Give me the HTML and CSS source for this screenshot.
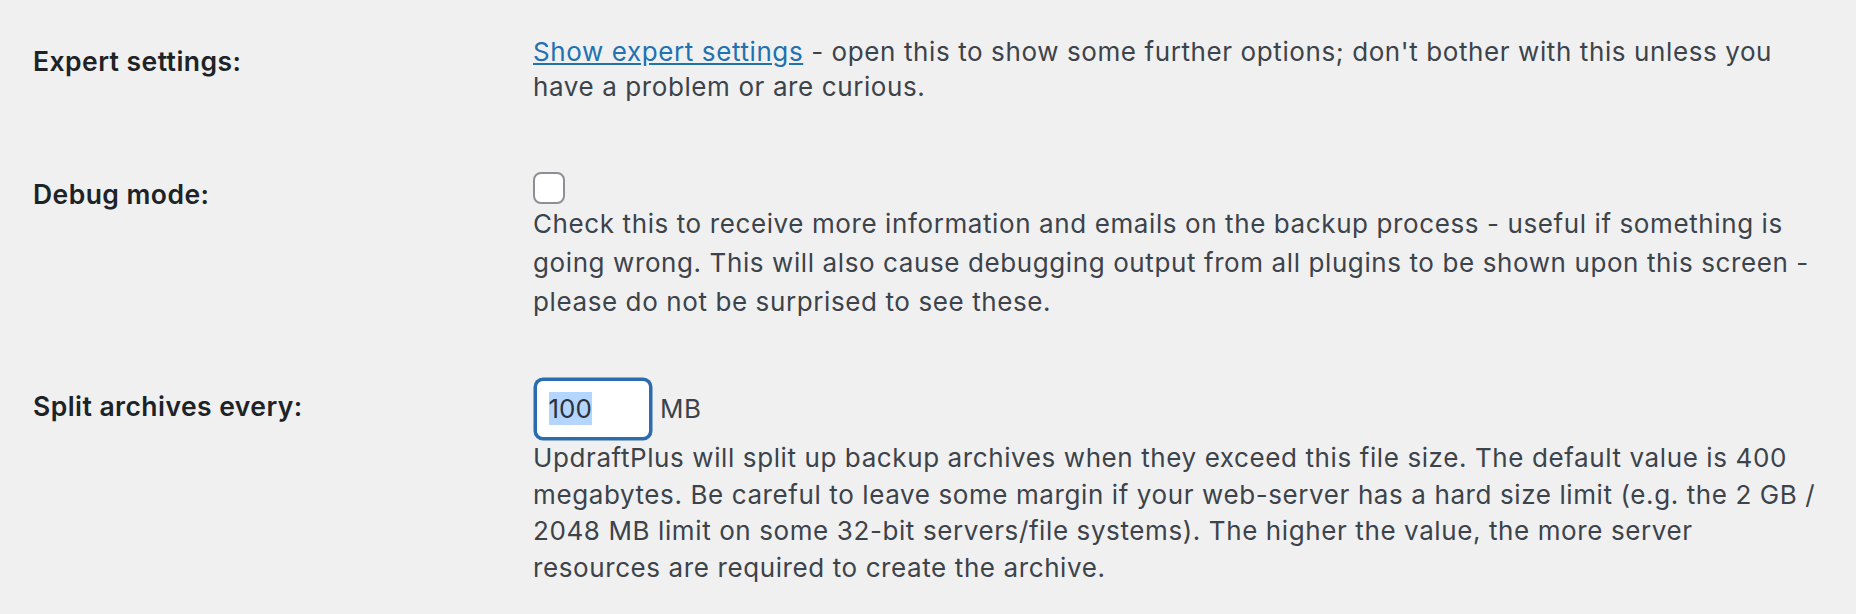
FILE: index.html
```html
<!DOCTYPE html>
<html lang="en">
<head>
    <meta charset="UTF-8">
    <meta name="viewport" content="width=device-width, initial-scale=1.0">
    <title>Advanced Settings</title>
    <link rel="stylesheet" href="styles.css">
</head>
<body>
    <div class="form-table">
        <div class="row">
            <div class="label">Expert settings:</div>
            <div class="value"><a href="#" class="expert-link">Show expert settings</a> - open this to show some further options; don't bother with this unless you have a problem or are curious.</div>
        </div>

        <div class="row">
            <div class="label">Debug mode:</div>
            <div class="value">
                <span class="checkbox"></span>
                <div class="desc desc-debug">Check this to receive more information and emails on the backup process - useful if something is going wrong. This will also cause debugging output from all plugins to be shown upon this screen - please do not be surprised to see these.</div>
            </div>
        </div>

        <div class="row">
            <div class="label">Split archives every:</div>
            <div class="value">
                <div class="field-row">
                    <div class="number-input"><span class="selected">100</span></div>
                    <span>MB</span>
                </div>
                <div class="desc desc-split">UpdraftPlus will split up backup archives when they exceed this file size. The default value is 400 megabytes. Be careful to leave some margin if your web-server has a hard size limit (e.g. the 2 GB / 2048 MB limit on some 32-bit servers/file systems). The higher the value, the more server resources are required to create the archive.</div>
            </div>
        </div>
    </div>
</body>
</html>
```

FILE: styles.css
```css
body {
    margin: 0;
    padding: 4px 0 0 33px;
    background-color: #f0f0f1;
    font-family: Inter, "Liberation Sans", sans-serif;
    font-size: 26px;
    letter-spacing: 0.6px;
    color: #3c434a;
}
.row {
    display: grid;
    grid-template-columns: 500px 1284px;
}
.label {
    padding-top: 40px;
    line-height: 35px;
    font-size: 26.5px;
    font-weight: 600;
    letter-spacing: 0.45px;
    color: #1d2327;
}
.value {
    padding: 30px 0 33px;
    line-height: 35px;
}
.expert-link {
    color: #2271b1;
    text-decoration: underline;
}
.checkbox {
    display: block;
    width: 32px;
    height: 32px;
    margin-top: 5px;
    box-sizing: border-box;
    border: 2px solid #8c8f94;
    border-radius: 8px;
    background-color: #fff;
}
.desc-debug {
    line-height: 39px;
    margin-bottom: -5px;
}
.field-row {
    display: flex;
    align-items: center;
    gap: 8px;
    margin-top: -2px;
}
.number-input {
    width: 116px;
    height: 60px;
    box-sizing: border-box;
    margin: 1.5px;
    padding-left: 12px;
    display: flex;
    align-items: center;
    border: 2px solid #2c6cae;
    box-shadow: 0 0 0 1.5px #2c6cae;
    border-radius: 8px;
    background-color: #fff;
    color: #2c3338;
    letter-spacing: 0;
}
.selected {
    background-color: #b4d5fe;
    line-height: 33px;
}
.desc-split {
    line-height: 36.5px;
}
```
